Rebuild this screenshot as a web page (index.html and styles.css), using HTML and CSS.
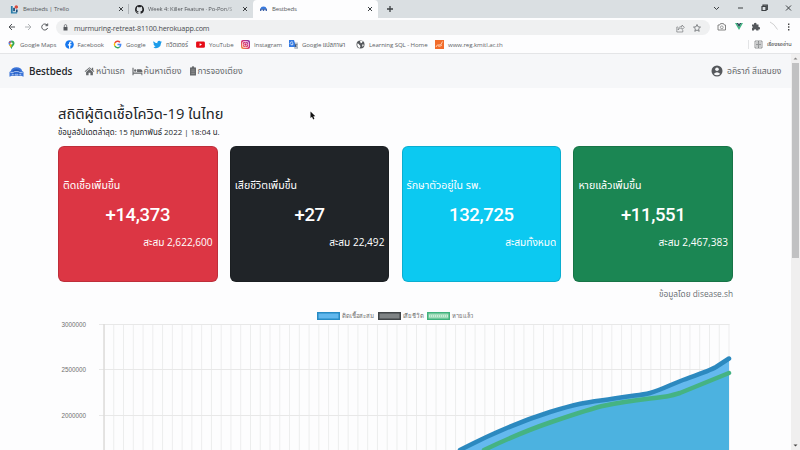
FILE: index.html
```html
<!DOCTYPE html>
<html lang="th">
<head>
<meta charset="utf-8">
<title>Bestbeds</title>
<link rel="stylesheet" href="styles.css">
</head>
<body>
<header class="browser">
  <div class="tabs">
    <div class="tab t1"><svg class="fav" viewBox="0 0 10 10"><rect x="1" y="0.5" width="8" height="9" rx="1" fill="#e9f0f5"/><path d="M1 1v8.5h7V8H3V1z" fill="#287ca8"/><path d="M3.5 3v4h2V3zM6.5 5v3h2V5z" fill="#1c4f7c"/><circle cx="7" cy="2.3" r="2" fill="#d64a3c"/></svg><span class="w1">Bestbeds | Trello</span><i class="x"><svg viewBox="0 0 6 6"><path d="M1 1l4 4M5 1L1 5"/></svg></i></div>
    <div class="tab t2"><svg class="fav" viewBox="0 0 16 16"><path fill="#202124" d="M8 0C3.58 0 0 3.58 0 8c0 3.54 2.29 6.53 5.47 7.59.4.07.55-.17.55-.38v-1.49c-2.23.48-2.7-.94-2.7-.94-.36-.92-.89-1.17-.89-1.17-.73-.5.05-.49.05-.49.8.06 1.23.83 1.23.83.72 1.22 1.87.87 2.33.66.07-.52.28-.87.5-1.07-1.77-.2-3.64-.89-3.64-3.95 0-.87.31-1.59.82-2.15-.08-.2-.36-1.02.08-2.12 0 0 .67-.21 2.2.82a7.6 7.6 0 0 1 4 0c1.53-1.04 2.2-.82 2.2-.82.44 1.1.16 1.92.08 2.12.51.56.82 1.27.82 2.15 0 3.07-1.87 3.75-3.65 3.95.29.25.54.73.54 1.48v2.2c0 .21.15.46.55.38A8 8 0 0 0 8 0z"/></svg><span class="fade">Week 4: Killer Feature · Po-Pon/S</span><i class="x"><svg viewBox="0 0 6 6"><path d="M1 1l4 4M5 1L1 5"/></svg></i></div>
    <div class="tab t3"><svg class="fav small" viewBox="0 0 10 8"><path d="M1 4a4 3.5 0 0 1 8 0z" fill="#3979dc"/><path d="M0 7V3l1.5 1h7L10 3v4H8V5H6v2H4V5H2v2z" fill="#4266aa"/></svg><span>Bestbeds</span><i class="x"><svg viewBox="0 0 6 6"><path d="M1 1l4 4M5 1L1 5"/></svg></i></div>
    <svg class="plus" viewBox="0 0 8 8"><path d="M4 1v6M1 4h6"/></svg>
    <svg class="winctl" viewBox="0 0 84 10"><path d="M3 4l2.5 2.5L8 4M27 5h5" /><path d="M51 3.5h4v4h-4zM52 3.5V2.2h4.300v4.300h-1" stroke-width="1.200"/><path d="M75 2.500l5 5M80 2.500l-5 5"/></svg>
  </div>
  <div class="toolbar">
    <svg class="navi" viewBox="0 0 44 10"><path d="M7 5H1M4 2L1 5l3 3" stroke="#4f5256"/><path d="M17 5h6M20 2l3 3-3 3" stroke="#b0b3b6"/><path d="M39 3a3 3 0 1 0 .6 3M39.700 1.500v2.200h-2.200" stroke="#4f5256"/></svg>
    <div class="omni">
      <svg class="lock" viewBox="0 0 5 7"><path d="M.5 3h4v3.500h-4z" fill="#55585c"/><path d="M1.300 3V1.800a1.200 1.200 0 0 1 2.400 0V3" fill="none" stroke="#55585c" stroke-width=".7"/></svg>
      <span class="url">murmuring-retreat-81100.herokuapp.com</span>
      <svg class="omi" viewBox="0 0 28 10"><path d="M2 4H.8v5h6V7M2 7c.3-3 1.700-3.500 4-3.500V2l2.400 2.400L6 6.500V5C4.500 5 3 5.500 2 7z" stroke-width=".6"/><path d="M21 1.500l1 2.300 2.500.3-1.900 1.700.6 2.500L21 7l-2.200 1.300.6-2.500-1.900-1.700 2.500-.3z" stroke-width=".8"/></svg>
    </div>
    <svg class="ext" viewBox="0 0 78 12"><path d="M1 4h1.700l.8-1.400h3L7.300 4H8.500v5H1z" fill="none" stroke="#777" stroke-width=".9"/><circle cx="4.800" cy="6.300" r="1.400" fill="none" stroke="#777" stroke-width=".7"/><path d="M18 2h1.700L22 6l2.300-4H26l-4 7z" fill="#41b883"/><path d="M19.700 2h1.500l.8 1.500.8-1.500h1.500L22 6z" fill="#243e50"/><path d="M35 3.500h2a1.300 1.300 0 1 1 2.500 0h2V6a1.200 1.200 0 1 1 0 2.300V9.500h-2.200a1.200 1.200 0 0 0-2.400 0H35V7.200a1.200 1.200 0 0 0 0-2.200z" fill="#55585c"/><path d="M53 1q4 1.500 7.500 7.500" stroke="#bbb" stroke-width=".7" fill="none"/><path d="M71 2.500h1.400v1.400H71zm0 2.800h1.400v1.400H71zm0 2.800h1.400v1.400H71z" fill="#444"/></svg>
  </div>
  <nav class="bookmarks">
    <div class="bm b1"><svg viewBox="0 0 9 9"><path d="M4.500.5A3 3 0 0 0 1.500 3.500C1.500 5.500 4 6.500 4.500 9z" fill="#4285f4"/><path d="M4.500.5a3 3 0 0 1 3 3C7.500 5.500 5 6.500 4.500 9L3 6z" fill="#34a853"/><path d="M2 5.200L4.500 2.500v4L4 7.500z" fill="#fbbc04"/><path d="M1.600 3L3 1l1.500 1.500z" fill="#ea4335"/><circle cx="4.500" cy="3.500" r="1.100" fill="#fff"/></svg><span>Google Maps</span></div>
    <div class="bm b2"><svg viewBox="0 0 9 9"><circle cx="4.500" cy="4.500" r="4.300" fill="#1677ee"/><path d="M4 8.800V5.500H2.900V4.200H4v-1q0-1.700 1.700-1.700h.8v1.200h-.6q-.6 0-.6.600v.9h1.200L6.300 5.500h-1v3.300z" fill="#fff"/></svg><span>Facebook</span></div>
    <div class="bm b3"><svg viewBox="0 0 9 9" fill="none" stroke-width="1.400"><path d="M7 2.200A3.200 3.200 0 0 0 1.800 3" stroke="#ea4335"/><path d="M1.800 3a3.200 3.200 0 0 0 0 3" stroke="#fbbc05"/><path d="M1.800 6A3.200 3.200 0 0 0 6.600 7" stroke="#34a853"/><path d="M6.600 7q1.100-1 1.100-2.500H4.500" stroke="#4285f4"/></svg><span>Google</span></div>
    <div class="bm b4"><svg viewBox="0 0 24 24"><path fill="#1c9cea" d="M23.900 4.600c-.9.400-1.800.7-2.800.8a5 5 0 0 0 2.100-2.700c-1 .6-2 1-3.100 1.200A4.900 4.900 0 0 0 11.700 8.400 14 14 0 0 1 1.600 3.200 4.900 4.900 0 0 0 3.200 9.800c-.8 0-1.600-.2-2.200-.6a4.900 4.900 0 0 0 3.900 4.900c-.7.200-1.500.2-2.200.1a4.900 4.900 0 0 0 4.600 3.400A9.900 9.900 0 0 1 0 19.600 14 14 0 0 0 21.500 7.100c1-.7 1.800-1.600 2.400-2.500z"/></svg><span>ทวิตเตอร์</span></div>
    <div class="bm b5"><svg viewBox="0 0 9 9"><rect x=".1" y="1.500" width="8.800" height="6.200" rx="1.300" fill="#e60b16"/><path d="M3.600 3.200v2.800L6 4.600z" fill="#fff"/></svg><span>YouTube</span></div>
    <div class="bm b6"><svg viewBox="0 0 9 9"><defs><linearGradient id="ig" x1="0" y1="1" x2="1" y2="0"><stop stop-color="#f8a13b"/><stop offset=".5" stop-color="#d82b6c"/><stop offset="1" stop-color="#7836b4"/></linearGradient></defs><rect width="9" height="9" rx="2" fill="url(#ig)"/><rect x="1.500" y="1.500" width="6" height="6" rx="1.600" fill="none" stroke="#fff" stroke-width=".7"/><circle cx="4.500" cy="4.500" r="1.500" fill="none" stroke="#fff" stroke-width=".7"/></svg><span>Instagram</span></div>
    <div class="bm b7"><svg viewBox="0 0 9 9"><path d="M3.500 2.500H9V9H5.500z" fill="#bdc3ca"/><path d="M0 0h5l2 7H0z" fill="#347ae2"/><path d="M4 2.500a1.500 1.500 0 1 0 .2 1.300H3" stroke="#fff" stroke-width=".7" fill="none"/><path d="M5.800 4.500h2.700M7 4q.5 2-1 3M6.300 5.500l2 2" stroke="#546377" stroke-width=".5"/></svg><span>Google แปลภาษา</span></div>
    <div class="bm b8"><svg viewBox="0 0 9 9"><circle cx="4.500" cy="4.500" r="4" fill="#55585c"/><path d="M1.300 3.500q1.500 0 2 1.300L4.500 6l-.7 2Q1 7.200 1.300 3.500zM4 1h2.700L6 2.700 4.700 3.300zM6 4.500l2 .3L6.700 7z" fill="#fff"/></svg><span>Learning SQL - Home</span></div>
    <div class="bm b9"><svg viewBox="0 0 9 9"><rect width="9" height="9" fill="#f26c2a"/><path d="M1 7q1-3 3-2t3.500-3.500M3 6q2 1 4-1" stroke="#ffd5b8" fill="none" stroke-width=".9"/></svg><span>www.reg.kmitl.ac.th</span></div>
    <div class="bm reading"><svg viewBox="0 0 9 9"><path d="M1 1h7v7H1zM4.500 1v7M2 3h2M2 4.500h2M2 6h2M5 3h2M5 4.500h2M5 6h2" fill="none" stroke="#686b6e" stroke-width=".7"/></svg><span>เรื่องรออ่าน</span></div>
  </nav>
</header>
<div class="view">
  <main class="page">
    <nav class="navbar">
      <svg class="logo" viewBox="0 0 16 12"><path d="M2 5Q3 1 8 1t6 4l1.500 1v5L13 10H3L.5 11V6z" fill="#3b74d8"/><path d="M3.500 5.200Q5 3 8 3t4.500 2.200L8 6.500z" fill="#2056b8"/><path d="M1.500 6.500h3l1.500-1h4l1.500 1h3M3 8.500q5 1 10 0" stroke="#c9dbf9" fill="none" stroke-width=".8"/><path d="M5.500 7v3M10.500 7v3" stroke="#174aa4" stroke-width=".8"/></svg>
      <strong class="brand">Bestbeds</strong>
      <a class="link l1"><svg viewBox="0 0 12 10"><path d="M6 .8L.7 5.400l.6.7L6 2l4.700 4.100.6-.7L10 4.200V1.500H8.600V3z"/><path d="M6 2.800L2.300 6v3.500H5V7h2v2.500h2.700V6z"/></svg><span>หน้าแรก</span></a>
      <a class="link l2"><svg viewBox="0 0 12 10"><path d="M.5 1.500h1.200V6.500h9.600v3h-1V8H1.700v1.500H.5zM5.500 3h4Q11.500 3 11.500 6h-6z"/><circle cx="3.500" cy="4.500" r="1.300"/></svg><span>ค้นหาเตียง</span></a>
      <a class="link l3"><svg viewBox="0 0 8 10"><path d="M1 1.500h1.700a1.300 1.300 0 0 1 2.600 0H7V9.500H1z"/><path d="M2.300 4h3.500M2.300 5.800h3.500M2.300 7.600h3.500" stroke="#aaa" stroke-width=".6"/></svg><span>การจองเตียง</span></a>
      <div class="user"><svg viewBox="0 0 12 12"><circle cx="6" cy="6" r="5.500"/><circle cx="6" cy="4.300" r="1.800" fill="#f6f7f9"/><path d="M2.700 9Q6 5.500 9.300 9 6 11.500 2.700 9z" fill="#f6f7f9"/></svg><span>อคิราภ์ สีแสนยง</span></div>
    </nav>
    <section class="content">
      <h1><span>สถิติผู้ติดเชื้อโควิด-19 ในไทย</span></h1>
      <p class="updated"><span>ข้อมูลอัปเดตล่าสุด: 15 กุมภาพันธ์ 2022 | 18:04 น.</span></p>
      <div class="cards">
        <article class="card red"><h2><span>ติดเชื้อเพิ่มขึ้น</span></h2><b>+14,373</b><p><span>สะสม 2,622,600</span></p></article>
        <article class="card black"><h2><span>เสียชีวิตเพิ่มขึ้น</span></h2><b>+27</b><p><span>สะสม 22,492</span></p></article>
        <article class="card cyan"><h2><span>รักษาตัวอยู่ใน รพ.</span></h2><b>132,725</b><p><span>สะสมทั้งหมด</span></p></article>
        <article class="card green"><h2><span>หายแล้วเพิ่มขึ้น</span></h2><b>+11,551</b><p><span>สะสม 2,467,383</span></p></article>
      </div>
      <p class="source"><span>ข้อมูลโดย disease.sh</span></p>
      <svg class="chart" viewBox="58 304 675 146" width="675" height="146">
        <defs><pattern id="grid" x="103.500" y="324" width="9.766" height="126" patternUnits="userSpaceOnUse"><path d="M.5 0v126" stroke="#eceded"/></pattern></defs>
        <rect x="104" y="324" width="626" height="126" fill="url(#grid)"/>
        <path d="M99 324.500h630.500M99 369.500h630M99 415.500h630" stroke="#e8e8e8"/>
        <path d="M104 324v126" stroke="#dcdbda" stroke-width="1.500"/>
        <path d="M460 450C487 436 515 423 550 412S592 402 614 398.500S640 395.500 650 393S672 384 683 380S709 371 716 367L729 358.500V450z" fill="#64b9ee"/>
        <path d="M484 450C507 439 528 430 550 422.500S593 408 605 405.500S630 401 650 398.500S670 396 680 393L729 373V450z" fill="#4cb2e0"/>
        <path d="M460 450C487 436 515 423 550 412S592 402 614 398.500S640 395.500 650 393S672 384 683 380S709 371 716 367L729 358.500" class="line blue"/>
        <path d="M484 450C507 439 528 430 550 422.500S593 408 605 405.500S630 401 650 398.500S670 396 680 393L729 373" class="line mint"/>
        <g stroke-width="1.500"><path d="M317.750 312.750h21.500v6.500h-21.500z" fill="#61b7ed" stroke="#278bc4"/><path d="M378.750 312.750h21.500v6.500h-21.500z" fill="#7f8385" stroke="#414548"/><path d="M427.750 312.750h21.500v6.500h-21.500z" fill="#a0dcba" stroke="#40b27d"/></g>
        <path d="M429 316h19" stroke="#d5f0df" stroke-width="1.500" stroke-dasharray="1 1"/>
        <g class="ctext"><text x="342" y="318" textLength="32" lengthAdjust="spacingAndGlyphs">ติดเชื้อสะสม</text><text x="402.500" y="318" textLength="21" lengthAdjust="spacingAndGlyphs">เสียชีวิต</text><text x="452" y="318" textLength="22" lengthAdjust="spacingAndGlyphs">หายแล้ว</text><text x="61.500" y="326.500" textLength="24.500">3000000</text><text x="61.500" y="372" textLength="24.500">2500000</text><text x="61.500" y="417.500" textLength="24.500">2000000</text></g>
      </svg>
    </section>
  </main>
  <aside class="scroll"><svg viewBox="0 0 9 9"><path d="M2.500 5.500L4.500 3.500l2 2z"/></svg><div class="thumb"></div><svg class="down" viewBox="0 0 9 9"><path d="M2.500 3.500h4l-2 2z"/></svg></aside>
</div>
<svg class="cursor" viewBox="0 0 6 9"><path d="M.5.5v6.500L2 5.700l1.200 2.700 1.200-.6L3.300 5.300h2z"/></svg>
</body>
</html>
```
FILE: styles.css
```css
* { box-sizing: border-box; }
body { margin: 0; width: 800px; height: 450px; overflow: hidden; background: #fdfdfe; font-family: "Open Sans", "Noto Sans Thai", "Noto Sans", sans-serif; color: #212529; }
h1, h2, p { margin: 0; font-weight: 400; }
svg { flex: none; display: block; }
span { white-space: nowrap; }
.browser { height: 54px; border-bottom: 1px solid #e4e5e7; background: #fdfdfe; }
.tabs { height: 18px; background: #dadfe2; display: flex; align-items: center; font-size: 6px; letter-spacing: -.12px; color: #55585c; }
.tab { display: flex; align-items: center; height: 18px; }
.t1 { width: 129px; padding-left: 10px; border-right: 1px solid #aeb3b7; height: 10px; }
.t2 { width: 124px; padding-left: 6px; }
.t3 { width: 125px; padding-left: 7px; background: #fdfdfe; border-radius: 4px 4px 0 0; }
.fav { width: 9px; height: 9px; margin-right: 4px; }
.small { width: 7px; height: 6px; margin-right: 5px; }
.fade { font-size: 5.900px; letter-spacing: -.15px; mask-image: linear-gradient(90deg, #000 90%, #0006); }
.x { margin-left: auto; width: 6px; margin-right: 5px; }
.t1 .x { margin-right: 4px; }
.x svg, .plus, .winctl { stroke: #3c4043; fill: none; stroke-width: 1; }
.plus { width: 8px; height: 8px; margin-left: 7.500px; stroke-width: 1.300; }
.winctl { width: 84px; height: 10px; margin-left: auto; margin-right: 5px; margin-top: -2px; }
.toolbar { height: 18px; display: flex; align-items: center; }
.navi { width: 44px; height: 10px; fill: none; margin-left: 8px; margin-right: 4px; }
.omni { height: 15px; width: 654px; border-radius: 8px; background: #eff0f1; display: flex; align-items: center; padding: 0 6px 0 7px; margin-top: 1px; }
.lock { width: 5px; height: 7px; }
.url { font-size: 7.200px; letter-spacing: -.16px; margin-left: 6px; color: #494c50; }
.omi { width: 28px; height: 10px; fill: none; stroke: #666a6d; margin-left: auto; }
.ext { width: 78px; height: 12px; margin-left: 7px; }
.bookmarks { height: 17px; display: flex; font-size: 6.100px; letter-spacing: -.08px; color: #606367; padding-left: 7px; }
.bm { display: flex; align-items: center; gap: 4px; }
.bm svg { width: 9px; height: 9px; }
.b1 { width: 57.500px; } .b2 { width: 48.500px; } .b3 { width: 40px; } .b4 { width: 43px; } .b5 { width: 45px; } .b6 { width: 48px; } .b7 { width: 67px; } .b8 { width: 79px; }
.b4, .b7 { letter-spacing: -.12px; }
.reading { margin: 4px 0; margin-left: auto; width: 52px; padding-left: 5px; border-left: 1px solid #e3e4e6; color: #444; font-size: 5.600px; letter-spacing: -.1px; }
.view { display: flex; height: 396px; }
.page { flex: 1; }
.navbar { height: 34px; background: #f6f7f9; display: flex; align-items: center; padding: 0 9px; color: #65686b; }
.logo { width: 15px; height: 12px; margin-top: 2px; }
.brand { font-size: 9.800px; font-weight: 600; color: #25282b; width: 55px; margin-left: 5px; }
.link { display: flex; align-items: center; gap: 1px; font-size: 8.900px; fill: #65686b; height: 20px; }
.link svg { width: 11px; height: 10px; }
.l1 { width: 47.500px; } .l2 { width: 57px; }
.l3 { font-size: 8.700px; }
.l3 svg { width: 8px; }
.user { margin-left: auto; display: flex; align-items: center; gap: 4px; width: 71px; font-size: 8.500px; fill: #55585c; }
.user svg { width: 12px; height: 12px; }
.content { width: 675px; margin-left: 58px; }
h1 { height: 38px; padding-top: 15px; line-height: 20px; font-size: 14.700px; }
.updated { height: 20px; line-height: 12px; font-size: 7.900px; }
.cards { display: flex; gap: 12.200px; height: 136px; }
.card { flex: 1; height: 136px; border-radius: 6px; padding: 30px 4px 0; color: #fff; border: 1px solid #0002; }
.card h2 { font-size: 10.600px; line-height: 16px; }
.card b { display: block; text-align: center; font: 500 18.500px/28px Roboto, sans-serif; letter-spacing: -.35px; margin-top: 8px; }
.card p { text-align: right; font-size: 10.100px; line-height: 16px; margin-top: 5px; }
.red { background: #dc3644; } .black { background: #202428; } .cyan { background: #0cc9f1; } .green { background: #1b8653; }
.source { text-align: right; height: 22px; font-size: 8.300px; line-height: 23px; color: #6b7075; }
.line { fill: none; stroke-width: 4.500; stroke-linecap: round; }
.blue { stroke: #2c89bf; } .mint { stroke: #45b383; }
.ctext { font: 6.300px "Liberation Sans", sans-serif; fill: #707070; }
.scroll { width: 9px; background: #f0efef; display: flex; flex-direction: column; fill: #858585; }
.scroll svg { width: 9px; height: 9px; }
.thumb { height: 195px; margin: 0 1px; background: #c1c1c2; }
.scroll .down { margin-top: auto; fill: #444; }
.cursor { position: absolute; left: 310px; top: 111px; width: 6px; height: 9px; fill: #111; }
```
